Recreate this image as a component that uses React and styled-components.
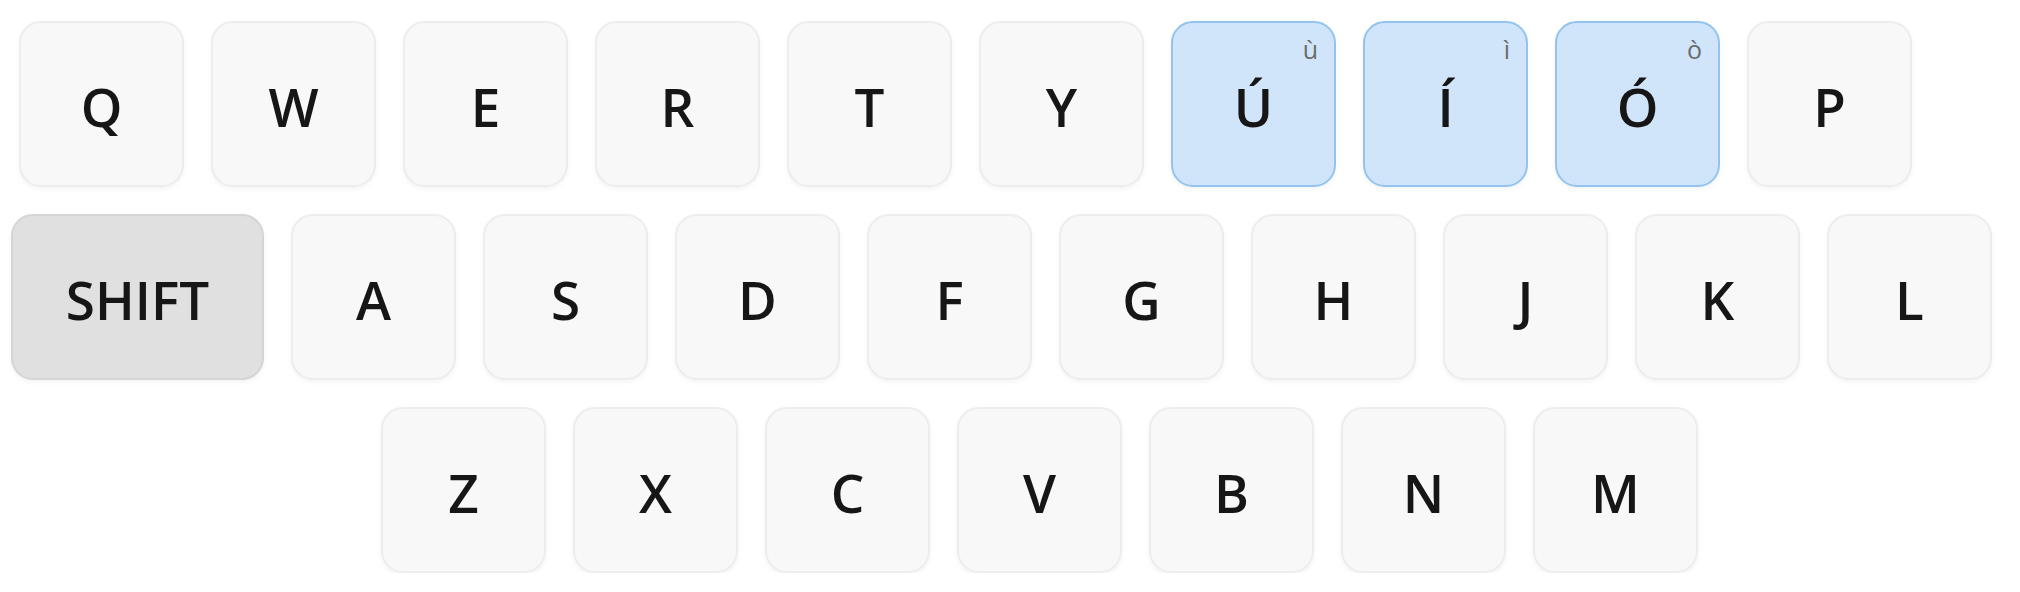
import styled, { createGlobalStyle } from "styled-components";

const rows = [
  {
    offset: 19,
    keys: [
      { label: "Q" }, { label: "W" }, { label: "E" }, { label: "R" }, { label: "T" }, { label: "Y" },
      { label: "Ú", alt: "ù" }, { label: "Í", alt: "ì" }, { label: "Ó", alt: "ò" }, { label: "P" },
    ],
  },
  {
    offset: 11,
    keys: [
      { label: "SHIFT", wide: true },
      { label: "A" }, { label: "S" }, { label: "D" }, { label: "F" }, { label: "G" },
      { label: "H" }, { label: "J" }, { label: "K" }, { label: "L" },
    ],
  },
  {
    offset: 381,
    keys: [
      { label: "Z" }, { label: "X" }, { label: "C" }, { label: "V" }, { label: "B" }, { label: "N" }, { label: "M" },
    ],
  },
];

export default function App() {
  return (
    <>
      <Global />
      <Keyboard>
        {rows.map((row, i) => (
          <Row key={i} $offset={row.offset}>
            {row.keys.map((k) => (
              <Key key={k.label} $wide={k.wide} $accent={!!k.alt} $mod={k.wide}>
                {k.label}
                {k.alt && <Alt>{k.alt}</Alt>}
              </Key>
            ))}
          </Row>
        ))}
      </Keyboard>
    </>
  );
}

const Global = createGlobalStyle`
  html,body{margin:0;padding:0;background:#fff;}
  body{font-family:"Open Sans","Noto Sans","Liberation Sans",sans-serif;}
`;
const Keyboard = styled.div`display:flex;flex-direction:column;gap:27px;padding-top:21px;`;
const Row = styled.div`display:flex;gap:27px;padding-left:${(p) => p.$offset}px;`;
const Key = styled.div`
  position:relative;box-sizing:border-box;flex:none;
  width:${(p) => (p.$wide ? 253 : 165)}px;height:166px;
  display:flex;align-items:center;justify-content:center;
  padding-top:4px;
  border-radius:22px;
  background:${(p) => (p.$accent ? "#d0e5fa" : p.$mod ? "#e0e0e0" : "#f8f8f8")};
  border:${(p) => (p.$accent ? "2px solid #93c3f0" : p.$mod ? "2px solid #d5d5d5" : "2px solid #ededed")};
  box-shadow:0 2px 5px rgba(0,0,0,.05);
  color:#161616;font-size:53px;font-weight:600;
`;
const Alt = styled.span`
  position:absolute;top:14px;right:16px;
  color:#6b6b6b;font-size:25px;font-weight:500;line-height:1;
`;
